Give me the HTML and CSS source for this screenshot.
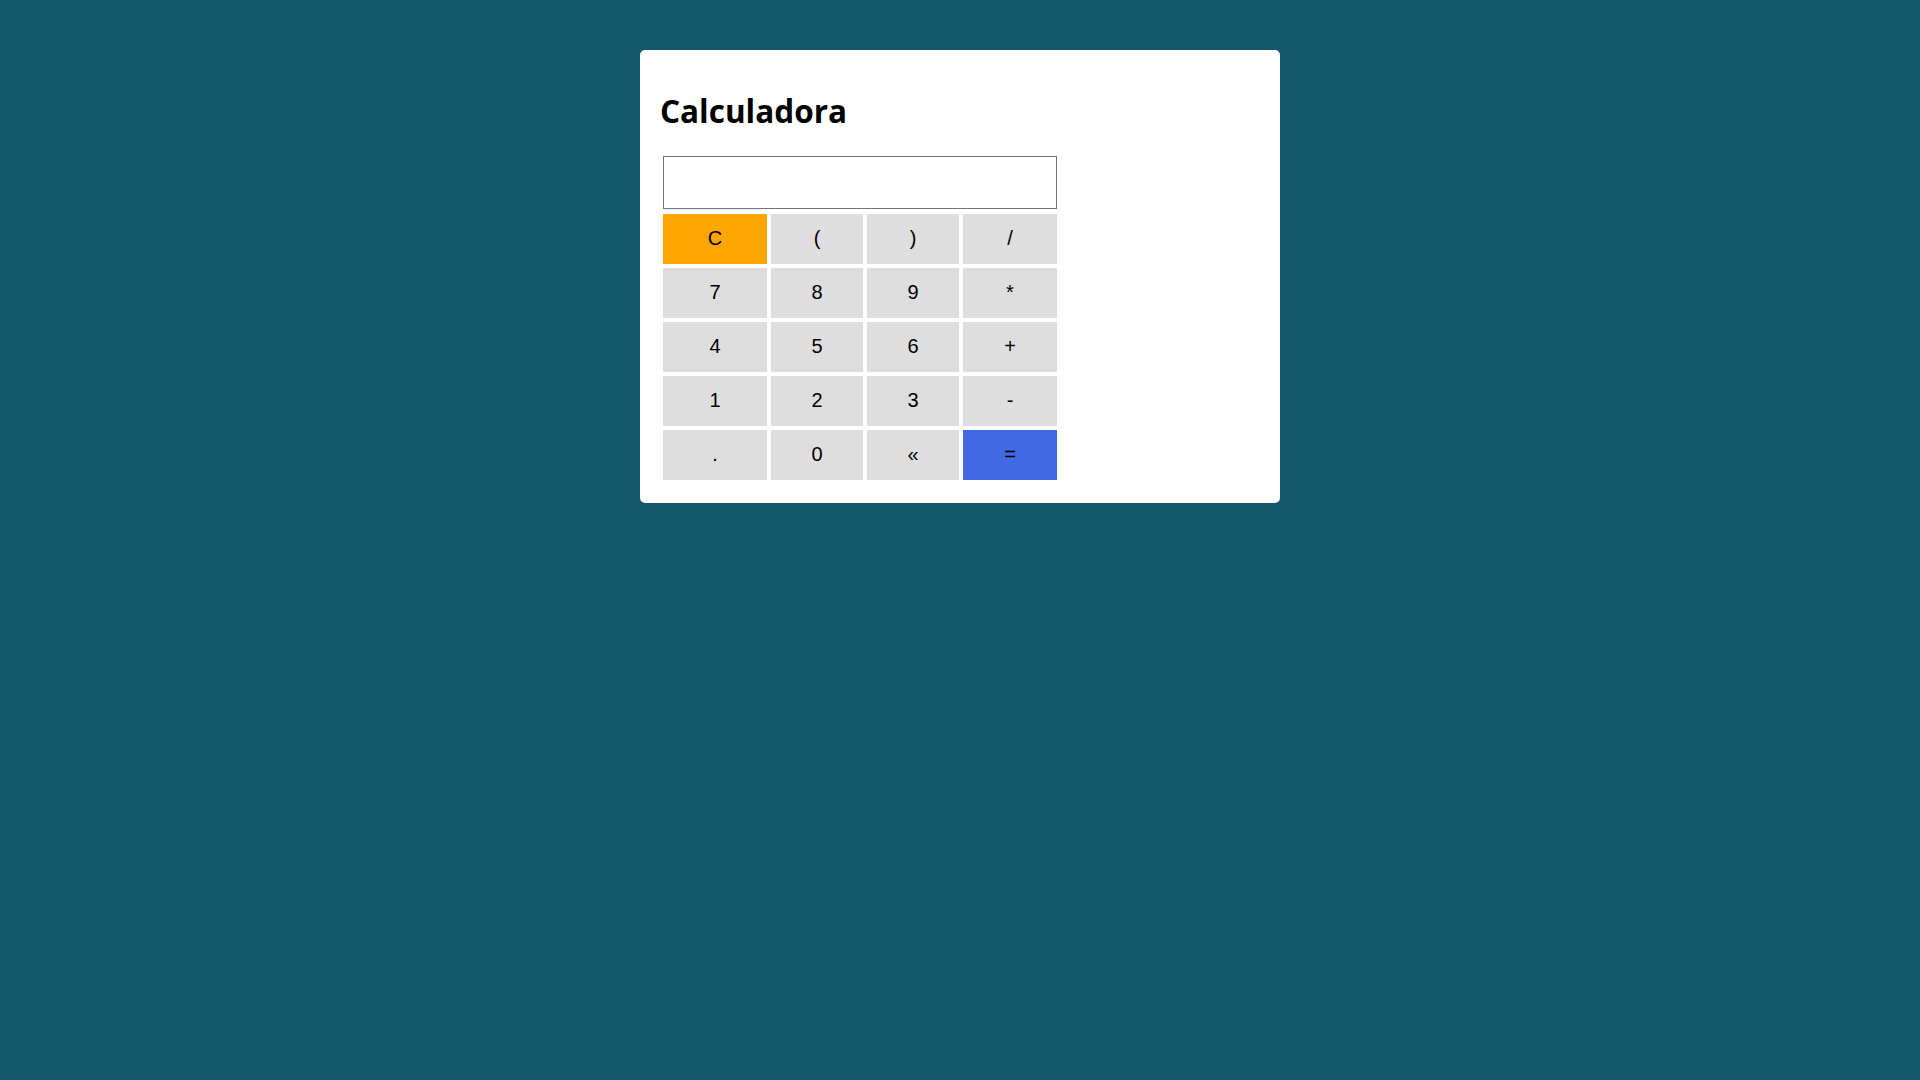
FILE: index.html
```html
<!DOCTYPE html>
<html lang="es">
<head>
<meta charset="utf-8">
<title>Calculadora</title>
<link rel="stylesheet" href="styles.css">
</head>
<body>
<div class="card">
  <h1 class="title">Calculadora</h1>
  <div class="calc">
    <input class="display" type="text">
    <button class="key clear">C</button>
    <button class="key">(</button>
    <button class="key">)</button>
    <button class="key">/</button>
    <button class="key">7</button>
    <button class="key">8</button>
    <button class="key">9</button>
    <button class="key">*</button>
    <button class="key">4</button>
    <button class="key">5</button>
    <button class="key">6</button>
    <button class="key">+</button>
    <button class="key">1</button>
    <button class="key">2</button>
    <button class="key">3</button>
    <button class="key">-</button>
    <button class="key">.</button>
    <button class="key">0</button>
    <button class="key">&laquo;</button>
    <button class="key equals">=</button>
  </div>
</div>
</body>
</html>
```
FILE: styles.css
```css
html, body {
  margin: 0;
  padding: 0;
}
body {
  background: #12566a;
  min-height: 1080px;
  font-family: "Open Sans", "Liberation Sans", sans-serif;
  padding-top: 50px;
  box-sizing: border-box;
}
.card {
  width: 640px;
  margin: 0 auto;
  background: #ffffff;
  border-radius: 5px;
  padding: 20px;
  box-sizing: border-box;
}
.title {
  font-family: "Open Sans", sans-serif;
  font-weight: 700;
  font-size: 31.5px;
  line-height: 42px;
  margin: 20px 0 21px 0;
  color: #000;
}
.calc {
  display: grid;
  grid-template-columns: 104px 92px 92px 94px;
  grid-template-rows: 54px repeat(5, 50px);
  gap: 4px;
  padding: 3px;
  width: max-content;
}
.display {
  grid-column: 1 / 5;
  height: 53px;
  box-sizing: border-box;
  border: 1px solid #767676;
  margin: 0 0 1px 0;
  padding: 0 4px;
  font-family: "Liberation Sans", sans-serif;
  font-size: 20px;
  background: #fff;
}
.key {
  border: none;
  background: #dedede;
  font-family: "Liberation Sans", Arial, sans-serif;
  font-size: 20px;
  color: #000;
  padding: 0 0 2px 0;
  margin: 0;
}
.clear {
  background: #ffa500;
}
.equals {
  background: #4169e1;
}
```
